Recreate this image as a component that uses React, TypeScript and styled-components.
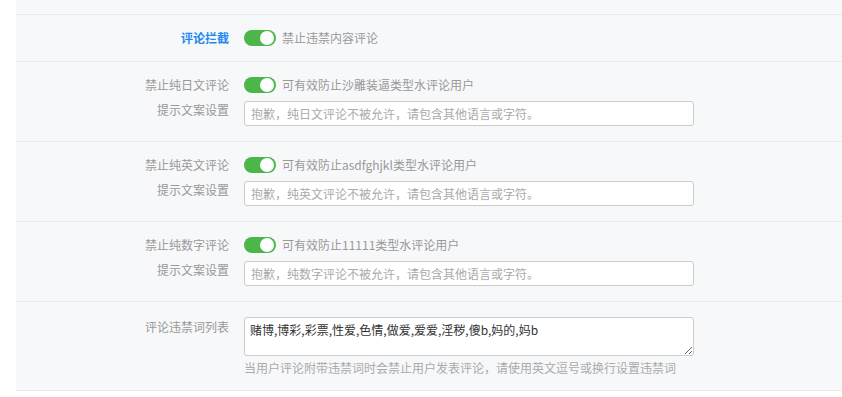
import * as React from 'react';
import styled, { createGlobalStyle } from 'styled-components';

const GlobalStyle = createGlobalStyle`
  html, body {
    margin: 0;
    padding: 0;
    background: #ffffff;
  }
  body {
    font-family: "Noto Sans CJK SC", "Noto Sans", sans-serif;
    font-size: 12px;
  }
`;

const Panel = styled.div`
  margin-left: 16px;
  background: #f7f8fa;
`;

const TopStub = styled.div`
  height: 14px;
  border-bottom: 1px solid #e8eaed;
`;

const Section = styled.div`
  display: grid;
  grid-template-columns: 213px 1fr;
  column-gap: 15px;
  row-gap: 8px;
  align-items: start;
  padding: 15px 0;
  border-bottom: 1px solid #e8eaed;
`;

const Label = styled.div<{ $active?: boolean; $lh?: number }>`
  text-align: right;
  font-size: 12px;
  line-height: ${(p) => p.$lh ?? 16}px;
  color: ${(p) => (p.$active ? '#1e88f0' : '#999999')};
  font-weight: ${(p) => (p.$active ? 700 : 400)};
  white-space: nowrap;
`;

const SwitchLine = styled.div`
  display: flex;
  align-items: center;
  gap: 6px;
  height: 16px;
`;

const Switch = styled.span<{ $on?: boolean }>`
  position: relative;
  display: inline-block;
  flex: none;
  width: 32px;
  height: 16px;
  border-radius: 8px;
  background: ${(p) => (p.$on ? '#4cb648' : '#cccccc')};

  &::after {
    content: '';
    position: absolute;
    top: 1px;
    ${(p) => (p.$on ? 'right: 2px;' : 'left: 2px;')}
    width: 14px;
    height: 14px;
    border-radius: 50%;
    background: #ffffff;
  }
`;

const SwitchText = styled.span`
  font-size: 12px;
  line-height: 16px;
  color: #999999;
  white-space: nowrap;
`;

const TextInput = styled.input`
  box-sizing: border-box;
  width: 450px;
  height: 25px;
  padding: 0 6px;
  border: 1px solid #cccccc;
  border-radius: 3px;
  background: #ffffff;
  font-family: inherit;
  font-size: 12px;
  color: #333333;
  outline: none;

  &::placeholder {
    color: #aaaaaa;
  }
`;

const Stack = styled.div`
  display: flex;
  flex-direction: column;
`;

const TextArea = styled.textarea`
  box-sizing: border-box;
  width: 450px;
  height: 39px;
  padding: 4px 5px;
  border: 1px solid #cccccc;
  border-radius: 3px;
  background: #ffffff;
  font-family: inherit;
  font-size: 12px;
  line-height: 16px;
  color: #333333;
  outline: none;
  resize: vertical;
`;

const Help = styled.div`
  margin-top: 5px;
  font-size: 12px;
  line-height: 14px;
  color: #aaaaaa;
`;

interface IPureRule {
  label: string;
  hint: string;
  placeholder: string;
}

const rules: IPureRule[] = [
  {
    label: '禁止纯日文评论',
    hint: '可有效防止沙雕装逼类型水评论用户',
    placeholder: '抱歉，纯日文评论不被允许，请包含其他语言或字符。',
  },
  {
    label: '禁止纯英文评论',
    hint: '可有效防止asdfghjkl类型水评论用户',
    placeholder: '抱歉，纯英文评论不被允许，请包含其他语言或字符。',
  },
  {
    label: '禁止纯数字评论',
    hint: '可有效防止11111类型水评论用户',
    placeholder: '抱歉，纯数字评论不被允许，请包含其他语言或字符。',
  },
];

const App: React.FunctionComponent = () => {
  return (
    <>
      <GlobalStyle />
      <Panel>
        <TopStub />
        <Section>
          <Label $active>评论拦截</Label>
          <SwitchLine>
            <Switch $on />
            <SwitchText>禁止违禁内容评论</SwitchText>
          </SwitchLine>
        </Section>
        {rules.map((rule, i) => (
          <Section key={i}>
            <Label>{rule.label}</Label>
            <SwitchLine>
              <Switch $on />
              <SwitchText>{rule.hint}</SwitchText>
            </SwitchLine>
            <Label $lh={18}>提示文案设置</Label>
            <TextInput placeholder={rule.placeholder} />
          </Section>
        ))}
        <Section>
          <Label $lh={20}>评论违禁词列表</Label>
          <Stack>
            <TextArea defaultValue="赌博,博彩,彩票,性爱,色情,做爱,爱爱,淫秽,傻b,妈的,妈b" />
            <Help>当用户评论附带违禁词时会禁止用户发表评论，请使用英文逗号或换行设置违禁词</Help>
          </Stack>
        </Section>
      </Panel>
    </>
  );
};

export default App;
